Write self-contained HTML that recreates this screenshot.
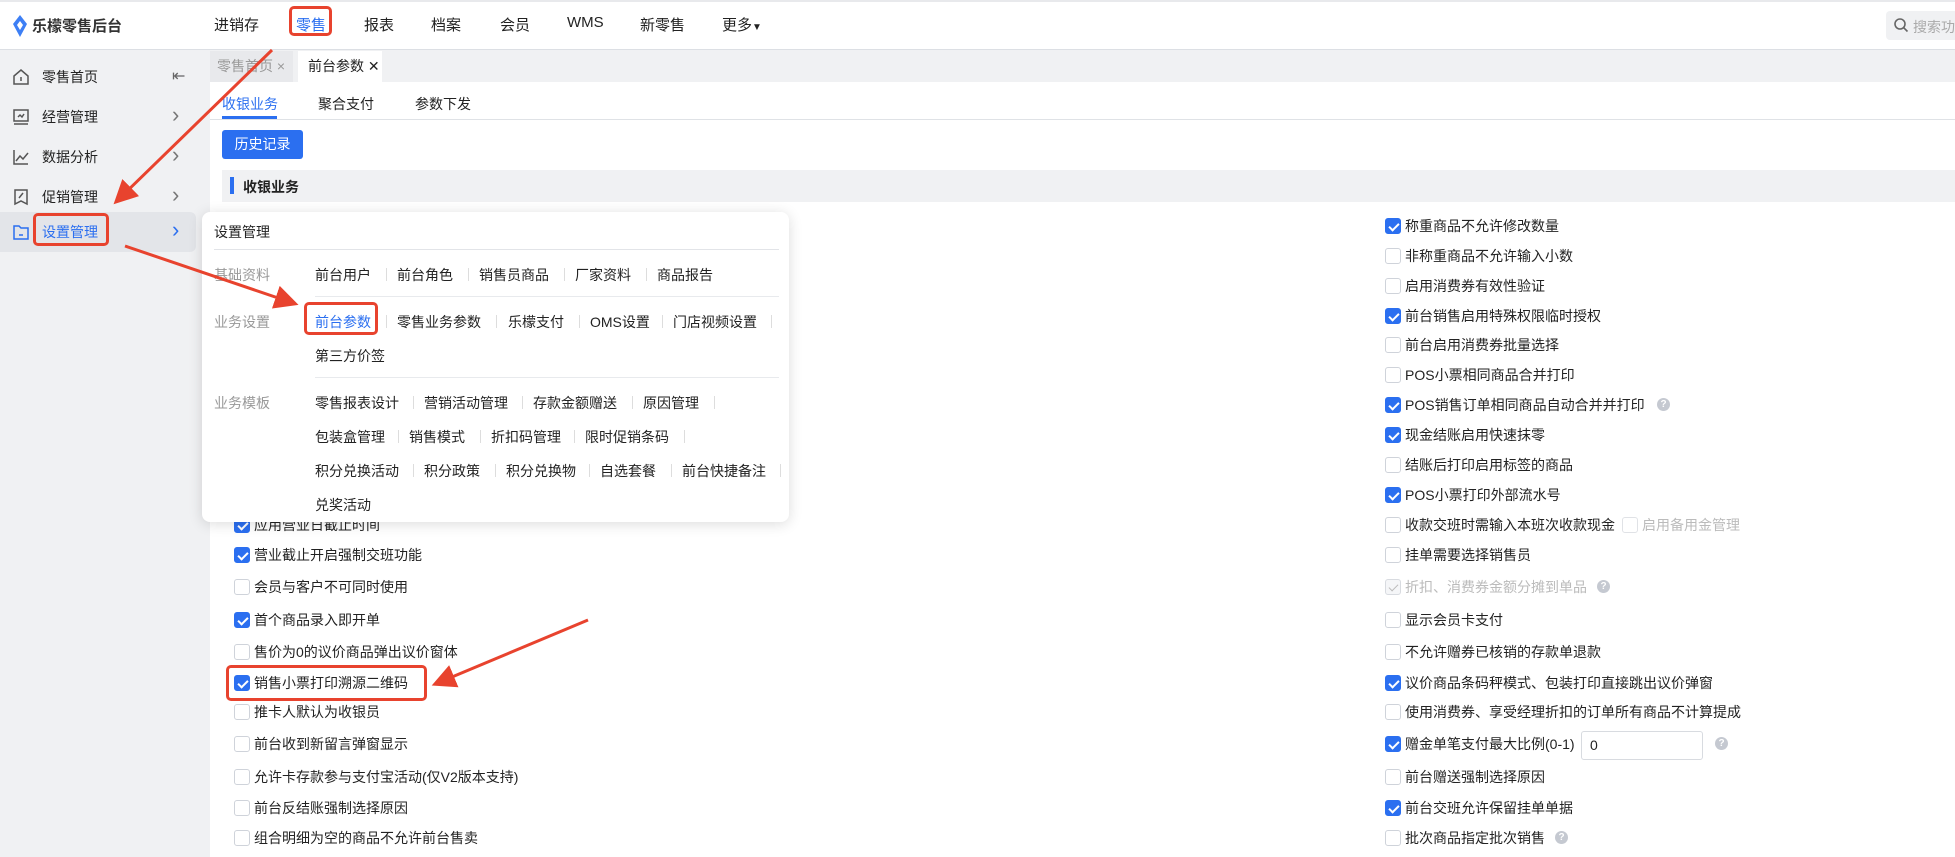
<!DOCTYPE html>
<html><head><meta charset="utf-8"><style>
*{margin:0;padding:0;box-sizing:border-box}
body{width:1955px;height:857px;overflow:hidden;background:#f0f1f3;font-family:"Liberation Sans","Noto Sans CJK SC",sans-serif;font-size:14px;color:#222;position:relative}
.abs{position:absolute;white-space:nowrap}
.top{position:absolute;left:0;top:0;width:1955px;height:50px;background:#fff;border-bottom:1px solid #dcdfe4;border-top:2px solid #e8e9ec}
.nav{position:absolute;top:12px;font-size:15px;color:#222}
.side{position:absolute;left:0;top:50px;width:200px;height:807px;background:#f0f1f3}
.si{position:absolute;left:0;width:196px;height:40px;font-size:14px;color:#222}
.si svg{position:absolute;left:12px;top:11px}
.si .t{position:absolute;left:42px;top:10px}
.si .ar{position:absolute;left:172px;top:5px;color:#777;font-size:22px}
.main{position:absolute;left:210px;top:82px;width:1745px;height:775px;background:#fff}
.cb{position:absolute;width:16px;height:16px;border:1px solid #cfd3da;border-radius:3px;background:#fff}
.cb.on{background:#2b6ff0;border-color:#2b6ff0}
.cb.on::after{content:"";position:absolute;left:4.5px;top:1.5px;width:4px;height:8px;border:solid #fff;border-width:0 2px 2px 0;transform:rotate(45deg)}
.cb.dis{background:#f5f6f8;border-color:#d8dbe0}
.cb.dis::after{content:"";position:absolute;left:4.5px;top:1.5px;width:4px;height:8px;border:solid #bbb;border-width:0 1.5px 1.5px 0;transform:rotate(45deg)}
.lbl{position:absolute;font-size:14px;color:#222;white-space:nowrap}
.q{position:absolute;width:13px;height:13px;border-radius:50%;background:#c5c9d1;color:#fff;font-size:10px;text-align:center;line-height:13px;font-weight:bold}
.pop{position:absolute;left:202px;top:212px;width:587px;height:310px;background:#fff;border-radius:8px;box-shadow:0 2px 14px rgba(0,0,0,.14)}
.pop .g{position:absolute;font-size:14px;color:#999}
.pop .i{position:absolute;font-size:14px;color:#222;white-space:nowrap}
.sep{position:absolute;width:1px;height:13px;background:#ddd}
.red{position:absolute;border:3px solid #e8432e;border-radius:5px}
</style></head><body>
<div class="top">
 <svg class="abs" style="left:12px;top:13px" width="16" height="22" viewBox="0 0 16 22"><path d="M8 0 L15 9 L8 22 L1 9 Z" fill="#3d7ff5"/><path d="M8 6 L11 10 L8 15 L5 10Z" fill="#fff"/></svg>
 <div class="abs" style="left:32px;top:13px;font-size:15px;font-weight:bold;color:#333">乐檬零售后台</div>
 <div class="nav" style="left:214px">进销存</div>
 <div class="nav" style="left:296px;color:#2b6ff0">零售</div>
 <div class="nav" style="left:364px">报表</div>
 <div class="nav" style="left:431px">档案</div>
 <div class="nav" style="left:500px">会员</div>
 <div class="nav" style="left:567px">WMS</div>
 <div class="nav" style="left:640px">新零售</div>
 <div class="nav" style="left:722px">更多<span style="font-size:10px">▼</span></div>
 <div class="abs" style="left:1886px;top:9px;width:80px;height:29px;background:#f0f1f3;border-radius:4px"></div>
 <svg class="abs" style="left:1893px;top:15px" width="16" height="16" viewBox="0 0 16 16"><circle cx="7" cy="7" r="5" fill="none" stroke="#666" stroke-width="1.6"/><path d="M11 11l3.5 3.5" stroke="#666" stroke-width="1.6"/></svg>
 <div class="abs" style="left:1913px;top:15px;color:#aaa;font-size:14px">搜索功</div>
</div>
<div class="side">
 <div class="si" style="top:7px"><svg width="18" height="18" viewBox="0 0 18 18" fill="none" stroke="#555" stroke-width="1.5"><path d="M2 8 L9 2 L16 8 V16 H2 Z"/><path d="M9 9v4"/></svg><span class="t">零售首页</span><span class="ar" style="color:#666;font-size:16px;top:9px">⇤</span></div>
 <div class="si" style="top:47px"><svg width="18" height="18" viewBox="0 0 18 18" fill="none" stroke="#555" stroke-width="1.5"><rect x="2" y="2" width="14" height="11"/><path d="M2 16h14M6 9l2-2 2 2 2-3"/></svg><span class="t">经营管理</span><span class="ar">›</span></div>
 <div class="si" style="top:87px"><svg width="18" height="18" viewBox="0 0 18 18" fill="none" stroke="#555" stroke-width="1.5"><path d="M2 2v14h14M4 13l4-5 3 3 5-6"/></svg><span class="t">数据分析</span><span class="ar">›</span></div>
 <div class="si" style="top:127px"><svg width="18" height="18" viewBox="0 0 18 18" fill="none" stroke="#555" stroke-width="1.5"><path d="M3 2h12v14l-6-3-6 3Z"/><path d="M7 10l4-5"/></svg><span class="t">促销管理</span><span class="ar">›</span></div>
 <div class="si" style="top:162px;height:40px;background:#e3e5e9;border-radius:0 6px 6px 0"><svg width="18" height="18" viewBox="0 0 18 18" fill="none" stroke="#2b6ff0" stroke-width="1.5"><path d="M2 3h5l2 2h7v11H2Z"/><path d="M7 12h4"/></svg><span class="t" style="color:#2b6ff0">设置管理</span><span class="ar" style="color:#2b6ff0">›</span></div>
</div>
<div class="abs" style="left:210px;top:51px;width:83px;height:31px;background:#e8e9ec;color:#999;padding:5px 7px">零售首页 ×</div>
<div class="abs" style="left:298px;top:51px;width:84px;height:31px;background:#fff;color:#222;padding:5px 10px">前台参数 ✕</div>
<div class="main">
 <div class="abs" style="left:12px;top:12px;color:#2b6ff0">收银业务</div>
 <div class="abs" style="left:12px;top:34px;width:55px;height:3px;background:#2b6ff0"></div>
 <div class="abs" style="left:108px;top:12px">聚合支付</div>
 <div class="abs" style="left:205px;top:12px">参数下发</div>
 <div class="abs" style="left:0;top:37px;width:1745px;height:1px;background:#dfe2e6"></div>
 <div class="abs" style="left:12px;top:48px;width:81px;height:29px;background:#2b6ff0;border-radius:3px;color:#fff;text-align:center;line-height:29px">历史记录</div>
 <div class="abs" style="left:12px;top:88px;width:1733px;height:32px;background:#f0f1f3"></div>
 <div class="abs" style="left:20px;top:95px;width:4px;height:17px;background:#2b6ff0"></div>
 <div class="abs" style="left:33px;top:95px;font-weight:bold">收银业务</div>
</div>
<div id="rows"></div>
<div class="pop">
 <div class="abs" style="left:12px;top:10px;font-size:14px">设置管理</div>
 <div class="abs" style="left:12px;top:37px;width:565px;height:1px;background:#e2e4e8"></div>
 <div class="g" style="left:12px;top:53px">基础资料</div>
 <div class="i" style="left:113px;top:53px">前台用户</div><div class="sep" style="left:184px;top:56px"></div>
 <div class="i" style="left:195px;top:53px">前台角色</div><div class="sep" style="left:266px;top:56px"></div>
 <div class="i" style="left:277px;top:53px">销售员商品</div><div class="sep" style="left:362px;top:56px"></div>
 <div class="i" style="left:373px;top:53px">厂家资料</div><div class="sep" style="left:444px;top:56px"></div>
 <div class="i" style="left:455px;top:53px">商品报告</div>
 <div class="abs" style="left:113px;top:84px;width:464px;height:1px;background:#e8eaed"></div>
 <div class="g" style="left:12px;top:100px">业务设置</div>
 <div class="i" style="left:113px;top:100px;color:#2b6ff0">前台参数</div><div class="sep" style="left:184px;top:103px"></div>
 <div class="i" style="left:195px;top:100px">零售业务参数</div><div class="sep" style="left:294px;top:103px"></div>
 <div class="i" style="left:306px;top:100px">乐檬支付</div><div class="sep" style="left:377px;top:103px"></div>
 <div class="i" style="left:388px;top:100px">OMS设置</div><div class="sep" style="left:460px;top:103px"></div>
 <div class="i" style="left:471px;top:100px">门店视频设置</div><div class="sep" style="left:569px;top:103px"></div>
 <div class="i" style="left:113px;top:134px">第三方价签</div>
 <div class="abs" style="left:113px;top:165px;width:464px;height:1px;background:#e8eaed"></div>
 <div class="g" style="left:12px;top:181px">业务模板</div>
 <div class="i" style="left:113px;top:181px">零售报表设计</div><div class="sep" style="left:211px;top:184px"></div>
 <div class="i" style="left:222px;top:181px">营销活动管理</div><div class="sep" style="left:320px;top:184px"></div>
 <div class="i" style="left:331px;top:181px">存款金额赠送</div><div class="sep" style="left:430px;top:184px"></div>
 <div class="i" style="left:441px;top:181px">原因管理</div><div class="sep" style="left:512px;top:184px"></div>
 <div class="i" style="left:113px;top:215px">包装盒管理</div><div class="sep" style="left:196px;top:218px"></div>
 <div class="i" style="left:207px;top:215px">销售模式</div><div class="sep" style="left:278px;top:218px"></div>
 <div class="i" style="left:289px;top:215px">折扣码管理</div><div class="sep" style="left:372px;top:218px"></div>
 <div class="i" style="left:383px;top:215px">限时促销条码</div><div class="sep" style="left:482px;top:218px"></div>
 <div class="i" style="left:113px;top:249px">积分兑换活动</div><div class="sep" style="left:211px;top:252px"></div>
 <div class="i" style="left:222px;top:249px">积分政策</div><div class="sep" style="left:293px;top:252px"></div>
 <div class="i" style="left:304px;top:249px">积分兑换物</div><div class="sep" style="left:387px;top:252px"></div>
 <div class="i" style="left:398px;top:249px">自选套餐</div><div class="sep" style="left:469px;top:252px"></div>
 <div class="i" style="left:480px;top:249px">前台快捷备注</div><div class="sep" style="left:578px;top:252px"></div>
 <div class="i" style="left:113px;top:283px">兑奖活动</div>
</div>
<div class="red" style="left:289px;top:6px;width:43px;height:30px"></div>
<div class="red" style="left:33px;top:213px;width:76px;height:33px"></div>
<div class="red" style="left:304px;top:302px;width:74px;height:33px"></div>
<div class="red" style="left:226px;top:665px;width:201px;height:36px"></div>
<svg class="abs" style="left:0;top:0" width="1955" height="857">
 <defs><marker id="a" markerWidth="8" markerHeight="8" refX="5" refY="4" orient="auto"><path d="M0 0L8 4L0 8Z" fill="#e8432e"/></marker></defs>
 <g stroke="#e8432e" stroke-width="3" fill="none" marker-end="url(#a)">
  <path d="M272 50 L120 198"/>
  <path d="M125 246 L290 302"/>
  <path d="M588 620 L440 682"/>
 </g>
</svg>
<script>
var L=[[525,1,"应用营业日截止时间"],[555,1,"营业截止开启强制交班功能"],[587,0,"会员与客户不可同时使用"],[620,1,"首个商品录入即开单"],[652,0,"售价为0的议价商品弹出议价窗体"],[683,1,"销售小票打印溯源二维码"],[712,0,"推卡人默认为收银员"],[744,0,"前台收到新留言弹窗显示"],[777,0,"允许卡存款参与支付宝活动(仅V2版本支持)"],[808,0,"前台反结账强制选择原因"],[838,0,"组合明细为空的商品不允许前台售卖"]];
var R=[[226,1,"称重商品不允许修改数量"],[256,0,"非称重商品不允许输入小数"],[286,0,"启用消费券有效性验证"],[316,1,"前台销售启用特殊权限临时授权"],[345,0,"前台启用消费券批量选择"],[375,0,"POS小票相同商品合并打印"],[405,1,"POS销售订单相同商品自动合并并打印",1],[435,1,"现金结账启用快速抹零"],[465,0,"结账后打印启用标签的商品"],[495,1,"POS小票打印外部流水号"],[525,0,"收款交班时需输入本班次收款现金"],[555,0,"挂单需要选择销售员"],[587,2,"折扣、消费券金额分摊到单品",1],[620,0,"显示会员卡支付"],[652,0,"不允许赠券已核销的存款单退款"],[683,1,"议价商品条码秤模式、包装打印直接跳出议价弹窗"],[712,0,"使用消费券、享受经理折扣的订单所有商品不计算提成"],[744,1,"赠金单笔支付最大比例(0-1)"],[777,0,"前台赠送强制选择原因"],[808,1,"前台交班允许保留挂单单据"],[838,0,"批次商品指定批次销售",1]];
var h="";
function row(x,r){var c=r[1]==1?"cb on":r[1]==2?"cb dis":"cb";h+='<div class="'+c+'" style="left:'+x+'px;top:'+(r[0]-8)+'px"></div>';
h+='<div class="lbl" style="left:'+(x+20)+'px;top:'+(r[0]-10)+'px;'+(r[1]==2?'color:#bbb':'')+'">'+r[2]+'</div>';}
L.forEach(function(r){row(234,r)});R.forEach(function(r){row(1385,r)});
var qs=[[405,1657],[587,1597],[838,1555],[744,1715]];
qs.forEach(function(q){h+='<div class="q" style="left:'+q[1]+'px;top:'+(q[0]-7)+'px">?</div>'});
h+='<div class="cb" style="left:1622px;top:517px;border-color:#e0e2e6"></div><div class="lbl" style="left:1642px;top:515px;color:#bbb">启用备用金管理</div>';
h+='<div class="abs" style="left:1581px;top:731px;width:122px;height:29px;border:1px solid #d8dbe0;border-radius:3px;padding:5px 8px">0</div>';
document.getElementById("rows").innerHTML=h;
</script>
</body></html>
